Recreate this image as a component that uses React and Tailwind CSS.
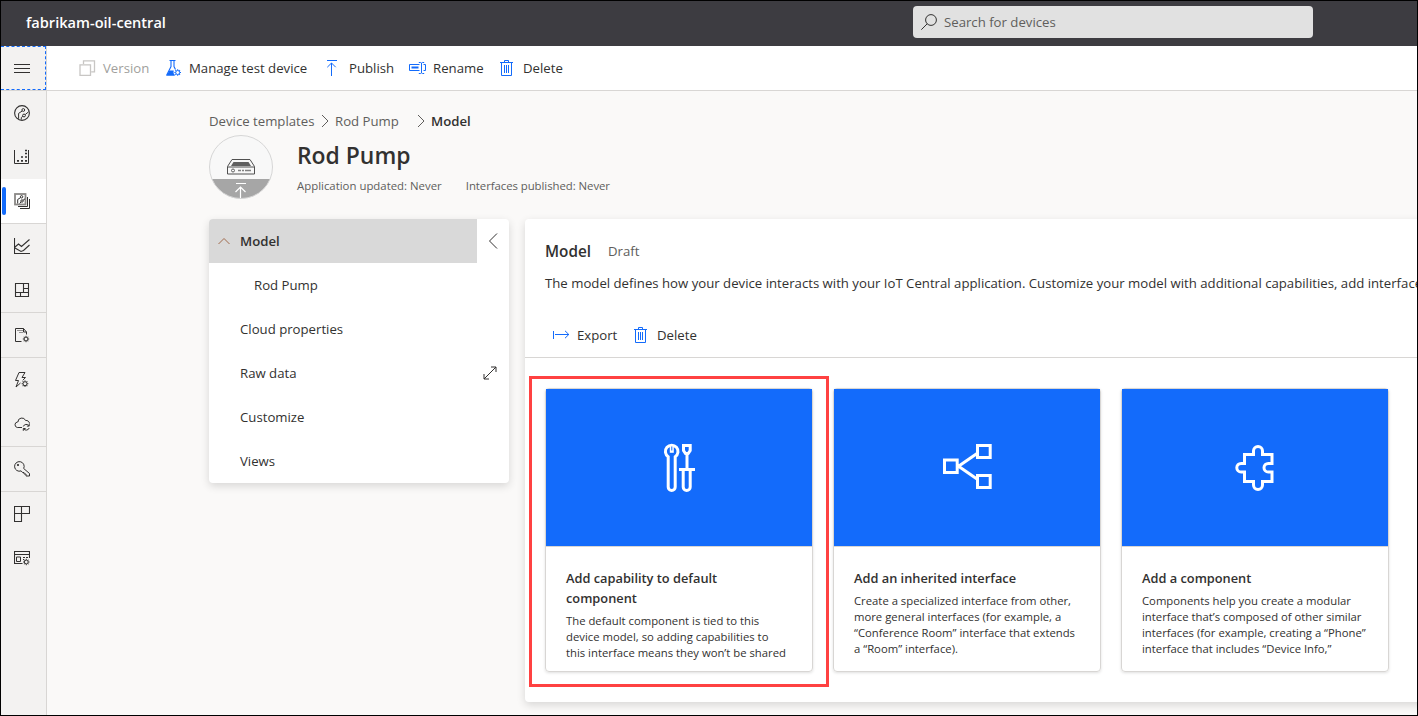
import React from "react";

const S = ({ children, w = 16, h = 16, className = "", sw = 1 }) => (
  <svg width={w} height={h} viewBox={`0 0 ${w} ${h}`} fill="none" stroke="currentColor" strokeWidth={sw} className={`shrink-0 block ${className}`}>
    {children}
  </svg>
);

const Label = ({ children, className = "" }) => <span className={`pt-0.5 ${className}`}>{children}</span>;

const Gear = ({ x, y, r = 2.3 }) => (
  <g transform={`translate(${x} ${y})`}>
    <circle r={r} />
    {[0, 45, 90, 135, 180, 225, 270, 315].map((a) => (
      <path key={a} d={`M0 ${-r - 0.2}V${-r - 1.3}`} transform={`rotate(${a})`} />
    ))}
  </g>
);

const MenuIcon = () => <S><path d="M0 4.5h16M0 8.5h16M0 12.5h16" /></S>;
const DashboardIcon = () => (
  <S>
    <circle cx="8" cy="8" r="7.4" strokeWidth="1.1" />
    <circle cx="9.3" cy="5" r="1.4" /><circle cx="10" cy="10.500" r="1.4" />
    <path d="M8.2 6L4.6 8.4v5.4M7.3 14.6V12.500l1.6-1.2M11.2 9.600l3.4-2.800" />
  </S>
);
const DevicesIcon = () => (
  <S>
    <path d="M.5 1v13.500h14V1" />
    <path d="M3 11.900h2M7 11.900h2M11 11.900h2M7 8h2M11 8h2M11 4.500h2M11 1.500h2" strokeWidth="1.700" />
  </S>
);
const TemplatesIcon = () => (
  <S>
    <rect x="1" y="1" width="10.5" height="10.5" stroke="#8a8886" strokeWidth="1.8" />
    <circle cx="7.600" cy="3.800" r="1.200" /><circle cx="8" cy="8" r="1.200" />
    <path d="M6.700 4.500L3.700 6.500v4M5.700 10.500L7 8.900M9 7.300l2-1.500" />
    <path d="M13.500 4v9.500H4M15.500 6v9.500H6" />
  </S>
);
const AnalyticsIcon = () => (
  <S><path d="M.5 0v15.500H16M1 9l3.500-3 3 2.500L15.500 1.500M1 10l6 3.500 2.500-1L15.500 7" strokeWidth="1.1" /></S>
);
const JobsGridIcon = () => (
  <S><path d="M1.500 1.500h13v13h-13zM9.500 1.500v9M1.500 10.500h13M9.500 6.500h5M6.500 10.500v4" strokeWidth="1.1" /></S>
);
const FileGearIcon = () => (
  <S>
    <path d="M7.500 14.500H1.500V1.500h8L12.500 5v2.500M9.500 1.500V5h3" />
    <path d="M3.500 3.500h1M5.500 3.500h1M7.500 3.500h1M5.500 5.500h1M7.500 5.500h1" />
    <Gear x={12} y={12} r={1.9} />
  </S>
);
const RulesIcon = () => (
  <S>
    <path d="M5 .5h6L8 5.500h3.500L8.800 8.300M5 .5L1.500 8.500h3L2 15l4.500-4" />
    <Gear x={11} y={11.700} r={2} />
  </S>
);
const CloudSyncIcon = () => (
  <S>
    <path d="M8 11.500H3.300A2.800 2.800 0 0 1 3.300 6h.6A4 4 0 0 1 11.600 4.500 3.300 3.300 0 0 1 15.500 7.500" />
    <path d="M9.300 10.500a3.200 3.200 0 0 1 5.600-.8M15.200 7.800v2.300h-2.300M15.200 12a3.200 3.200 0 0 1-5.600.8M9.300 14.800v-2.300h2.300" />
  </S>
);
const KeyIcon = () => (
  <S>
    <path d="M9.700 7.500a4.800 4.800 0 1 0-2.600 2.400L8.500 11.500h1.500v1.500H12v2h3.500v-2.500z" />
    <circle cx="4" cy="4" r=".7" fill="currentColor" />
  </S>
);
const AppsIcon = () => <S><path d="M.5.500h15v7H.5zM.5 7.500v8h7V.500" strokeWidth="1.1" /></S>;
const CustomizeIcon = () => (
  <S>
    <path d="M8.500 13.500h-8v-12h15V8M.5 4.500h15" strokeWidth="1.100" />
    <path d="M2.500 7h4v4.500h-4zM9 7.500h2M12 7.500h2M9 9.500h1" />
    <Gear x={12.3} y={12} r={1.9} />
  </S>
);

const VersionIcon = () => (
  <S w={17} className="text-[#c8c6c4]"><path d="M1 4.800h10.500V15.300H1zM4.500 4V.800h11v11h-3.200" strokeWidth="1.300" /></S>
);
const FlaskIcon = () => (
  <S className="text-[#136bfb]">
    <path d="M3.500.500h6M5 .500v6L.700 15h8M8 .500v6l1.500 3" strokeWidth="1.1" />
    <path d="M3.400 10.500h4.300L7.500 13l1.300 2.400H.600z" fill="currentColor" stroke="none" />
    <Gear x={11.700} y={12.500} r={2} />
  </S>
);
const PublishIcon = () => (
  <S w={12} className="text-[#136bfb]"><path d="M1 .5h10M5.500 3v13M1.300 7.200L5.500 3l4.200 4.200" /></S>
);
const RenameIcon = () => (
  <S w={18} className="text-[#136bfb]">
    <path d="M10.500 4.500H.5v6h10" />
    <path d="M2.500 7.500h7" strokeWidth="2" />
    <path d="M12.500 3v10M9.800 2.500h1.800l.9.600.9-.600h1.800M9.800 13.500h1.800l.9-.600.9.600h1.800M14.500 4.500h2v6h-2" />
  </S>
);
const TrashIcon = () => (
  <S w={13} className="text-[#136bfb]">
    <path d="M0 2.500h13M4.500 2.500v-2h4v2M1.500 2.500v13h10v-13M4.500 5v8M6.500 5v8M8.500 5v8" />
  </S>
);
const ExportIcon = () => (
  <S w={17} className="text-[#136bfb]"><path d="M.5 4v8M2 7.500h14M12 3.800l3.800 3.700-3.800 3.700" /></S>
);

const side = [
  { I: DashboardIcon }, { I: DevicesIcon }, { I: TemplatesIcon, on: true, line: true },
  { I: AnalyticsIcon }, { I: JobsGridIcon, line: true }, { I: FileGearIcon, line: true },
  { I: RulesIcon }, { I: CloudSyncIcon, line: true }, { I: KeyIcon, line: true },
  { I: AppsIcon }, { I: CustomizeIcon },
];

const ToolsArt = () => (
  <S w={48} h={49} sw={3}>
    <g transform="translate(0 1)">
      <path d="M13.200 12.700v30.300a3.500 3.500 0 0 0 7 0V12.700a6.300 6.300 0 1 0-7 0z" />
      <path d="M16.800 1v7.800" strokeWidth="4" />
      <path d="M16.800 2.500v4" stroke="#136bfb" strokeWidth="1" />
      <path d="M28.500 1.500h6.700v5l-2 3h-2.700l-2-3zM32 10v15M24 25.500h16M28.200 26v17a3.500 3.500 0 0 0 7 0V26" />
    </g>
  </S>
);
const ShareArt = () => (
  <S w={50} h={49} sw={3}>
    <path d="M2.500 17h12.700v12.500H2.500zM35.500 2.500h12.700v12H35.500zM35.500 32.500h12.700v12H35.500zM35 10.500L16.500 23.300 35 36" />
  </S>
);
const PuzzleArt = () => (
  <S w={48} h={49} sw={3}>
    <path transform="translate(0 1)" d="M13.500 10.500H22.500V7a4.500 4.500 0 0 1 9 0V10.500H41V19.400H37.300a4.300 4.300 0 0 0 0 8.600H41V37.500H31.500V41a4.500 4.500 0 0 1-9 0V37.500H13.500V28H10.100a4.300 4.300 0 0 1 0-8.600H13.500Z" />
  </S>
);

const cards = [
  { Art: ToolsArt, title: ["Add capability to default", "component"], text: ["The default component is tied to this", "device model, so adding capabilities to", "this interface means they won’t be shared"] },
  { Art: ShareArt, title: ["Add an inherited interface"], text: ["Create a specialized interface from other,", "more general interfaces (for example, a", "“Conference Room” interface that extends", "a “Room” interface)."] },
  { Art: PuzzleArt, title: ["Add a component"], text: ["Components help you create a modular", "interface that’s composed of other similar", "interfaces (for example, creating a “Phone”", "interface that includes “Device Info,”"] },
];

const Chevron = ({ className = "" }) => <S w={8} h={14} className={className}><path d="M1 1l6 6-6 6" /></S>;

export default function App() {
  return (
    <div className="flex h-[716px] w-[1418px] flex-col overflow-hidden border border-black bg-[#faf9f8] font-['Open_Sans','Noto_Sans',sans-serif] text-[13.2px] text-[#323130]">
      <header className="flex h-[45px] shrink-0 items-center bg-[#3d3c41]">
        <span className="ml-[25px] mb-0.5 whitespace-nowrap text-[14.6px] font-semibold text-white">fabrikam-oil-central</span>
        <div className="ml-auto mr-[104px] mb-[3px] flex h-8 w-[400px] items-center rounded-sm bg-[#e1e1e1] pl-2 text-[#605e5c]">
          <S className="text-[#323130]"><circle cx="10" cy="6" r="5.400" /><path d="M6.200 9.800L.3 15.700" /></S>
          <Label className="ml-[7px]">Search for devices</Label>
        </div>
      </header>
      <div className="flex min-h-0 flex-1">
        <nav className="flex w-[46px] shrink-0 flex-col border-r border-[#d8d6d4] bg-[#f3f2f1]">
          <button className="flex h-11 items-center border border-l-0 border-dashed border-[#136bfb] pl-[13px]"><MenuIcon /></button>
          <div className="h-px bg-[#d8d6d4]" />
          {side.map(({ I, on, line }, i) => (
            <div key={i} className={line ? "border-b border-[#d8d6d4]" : ""}>
              <div className={`flex h-11 items-center ${on ? "bg-white pl-px" : "pl-[13px]"}`}>
                {on && <i className="mr-2 h-7 w-1 rounded-sm bg-[#136bfb]" />}
                <I />
              </div>
            </div>
          ))}
        </nav>
        <main className="min-w-0 flex-1 overflow-hidden">
          <div className="flex h-[45px] items-center border-b border-[#d8d6d4] bg-white pl-8 whitespace-nowrap">
            <div className="flex w-[87px] items-center gap-[7px] text-[#a19f9d]"><VersionIcon /><Label>Version</Label></div>
            <div className="flex w-[160px] items-center gap-[7px]"><FlaskIcon /><Label>Manage test device</Label></div>
            <div className="flex w-[83px] items-center gap-[11px]"><PublishIcon /><Label>Publish</Label></div>
            <div className="flex w-[91px] items-center gap-[6px]"><RenameIcon /><Label>Rename</Label></div>
            <div className="flex items-center gap-[10px]"><TrashIcon /><Label>Delete</Label></div>
          </div>
          <div className="pl-[162px] whitespace-nowrap">
            <div className="mt-5 flex h-[20px] items-center text-[#605e5c]">
              <Label className="w-[112px]">Device templates</Label><Chevron className="mr-[6px]" />
              <Label className="w-[82px]">Rod Pump</Label><Chevron className="mr-[6px]" />
              <Label className="font-semibold text-[#323130]">Model</Label>
            </div>
            <div className="mt-1 flex">
              <svg width="64" height="64" viewBox="0 0 64 64" fill="none" className="shrink-0">
                <circle cx="32" cy="32" r="31.500" fill="#f8f8f8" />
                <path d="M2.900 44h58.200A31.500 31.500 0 0 1 2.900 44z" fill="#a6a6a6" />
                <circle cx="32" cy="32" r="31.500" stroke="#d6d6d6" />
                <path d="M18.500 31.500l4.500-7h18l4.500 7v7.500h-27zM18.500 32h27" stroke="#505050" strokeLinejoin="round" />
                <path d="M24.500 27h15l2.500 4h-20z" fill="#606060" />
                <circle cx="24" cy="35.500" r="1.500" stroke="#606060" />
                <path d="M29 35.500h3M33 35.500h2M36 35.500h6" stroke="#808080" strokeWidth="1.500" />
                <path d="M27 48.500h10M31.500 52v11M26.500 57l5-5 5 5" stroke="#fff" strokeWidth="1.200" />
              </svg>
              <div className="ml-6">
                <h1 className="mt-[6px] text-[22.9px] leading-[30px] font-semibold">Rod Pump</h1>
                <p className="mt-[6px] flex gap-6 text-[11.4px] leading-[18px] text-[#605e5c]"><span>Application updated: Never</span><span className="tracking-[-0.06px]">Interfaces published: Never</span></p>
              </div>
            </div>
            <div className="mt-5 flex items-start">
              <aside className="flex h-[264px] w-[300px] shrink-0 overflow-hidden rounded bg-white shadow-[0_3px_8px_rgba(0,0,0,0.14)]">
                <div className="w-[268px]">
                  <div className="flex h-11 items-center bg-[#d9d9d9] pl-[9px] font-semibold">
                    <S w={12} h={8} className="mr-[10px] text-[#a06a4c]"><path d="M.5 7L6 1.500 11.500 7" /></S><Label>Model</Label>
                  </div>
                  <div className="flex h-11 items-center pl-[45px]"><Label>Rod Pump</Label></div>
                  {["Cloud properties", "Raw data", "Customize", "Views"].map((t) => (
                    <div key={t} className="flex h-11 items-center pl-[31px]"><Label>{t}</Label></div>
                  ))}
                </div>
                <div className="flex flex-col">
                  <div className="flex h-11 items-center pl-[11px]"><S w={10} h={16}><path d="M9 .5L1.500 8 9 15.500" /></S></div>
                  <div className="mt-[88px] flex h-11 items-center pl-[6px]"><S w={14} h={14}><path d="M1 13L13 1M8 1h5v5M1 8v5h5" /></S></div>
                </div>
              </aside>
              <section className="ml-4 h-[483px] w-[1000px] shrink-0 rounded bg-white shadow-[0_3px_8px_rgba(0,0,0,0.14)]">
                <div className="h-[139px] border-b border-[#d8d6d4] pl-5 pt-[22px]">
                  <div className="flex h-5 items-center gap-[17px]"><span className="text-[15.3px] font-semibold">Model</span><Label className="text-[#605e5c]">Draft</Label></div>
                  <p className="mt-3 leading-5">The model defines how your device interacts with your IoT Central application. Customize your model with additional capabilities, add interfaces</p>
                  <div className="mt-[32px] flex h-5 items-center pl-2">
                    <ExportIcon /><Label className="ml-[7px] w-[57px]">Export</Label><TrashIcon /><Label className="ml-[10px]">Delete</Label>
                  </div>
                </div>
                <div className="relative flex gap-5 pl-5 pt-[30px]">
                  {cards.map(({ Art, title, text }) => (
                    <article key={title[0]} className="h-[284px] w-[268px] rounded-sm border border-[#d8d6d4] shadow-[0_1px_3px_rgba(0,0,0,0.13)]">
                      <div className="flex h-[157px] items-center justify-center bg-[#136bfb] text-white"><Art /></div>
                      <div className="border-t border-[#d8d6d4] px-5 pt-[21px]">
                        <h2 className="text-[12.8px] leading-5 font-semibold">{title.map((l) => <div key={l}>{l}</div>)}</h2>
                        <div className="mt-[5px] text-[11.3px] leading-4">{text.map((l) => <div key={l}>{l}</div>)}</div>
                      </div>
                    </article>
                  ))}
                  <div className="absolute left-1 top-[18px] h-[311px] w-[300px] border-3 border-[#ff4141]" />
                </div>
              </section>
            </div>
          </div>
        </main>
      </div>
    </div>
  );
}
